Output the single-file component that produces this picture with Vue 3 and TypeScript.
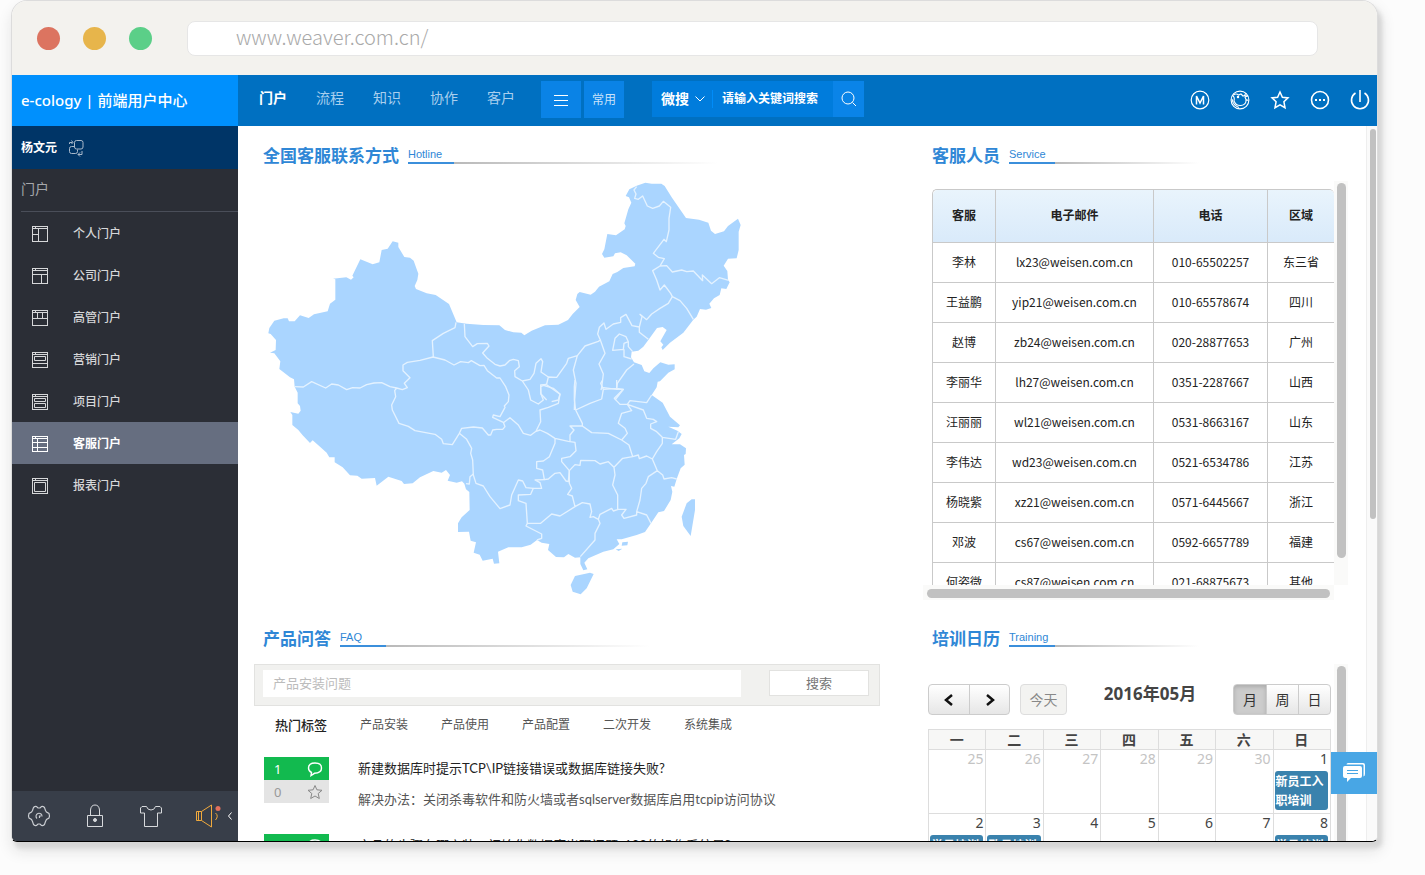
<script setup lang="ts">
import { ref } from 'vue'

interface MenuItem { name: string; icon: string }
interface Agent { name: string; mail: string; phone: string; area: string }
interface Day { n: number; other?: boolean; event?: string }
interface Question { replies: number; stars: number; title: string; answer: string }

const tabs: string[] = ['门户', '流程', '知识', '协作', '客户']
const activeTab = ref('门户')

const menu: MenuItem[] = [
  { name: '个人门户', icon: 'M1 9.5H7.5M7.5 3.5V17' },
  { name: '公司门户', icon: 'M1 7.5H17M10.5 7.5V17' },
  { name: '高管门户', icon: 'M1 9.5H17M6.5 3.5V9.5M11.5 3.5V9.5' },
  { name: '营销门户', icon: 'M3.5 5.5H14.5V9.5H3.5ZM1 12.5H17' },
  { name: '项目门户', icon: 'M3.5 5.5H14.5V8.5H3.5ZM3.5 10.5H14.5V14.5H3.5Z' },
  { name: '客服门户', icon: 'M1 7.5H17M1 12.5H17M6.5 3.5V17' },
  { name: '报表门户', icon: 'M3.5 5.5H14.5V14.5H3.5Z' },
]
const activeMenu = ref('客服门户')

const agents: Agent[] = [
  { name: '李林', mail: 'lx23@weisen.com.cn', phone: '010-65502257', area: '东三省' },
  { name: '王益鹏', mail: 'yip21@weisen.com.cn', phone: '010-65578674', area: '四川' },
  { name: '赵博', mail: 'zb24@weisen.com.cn', phone: '020-28877653', area: '广州' },
  { name: '李丽华', mail: 'lh27@weisen.com.cn', phone: '0351-2287667', area: '山西' },
  { name: '汪丽丽', mail: 'wl21@weisen.com.cn', phone: '0531-8663167', area: '山东' },
  { name: '李伟达', mail: 'wd23@weisen.com.cn', phone: '0521-6534786', area: '江苏' },
  { name: '杨晓紫', mail: 'xz21@weisen.com.cn', phone: '0571-6445667', area: '浙江' },
  { name: '邓波', mail: 'cs67@weisen.com.cn', phone: '0592-6657789', area: '福建' },
  { name: '何姿微', mail: 'cs87@weisen.com.cn', phone: '021-68875673', area: '其他' },
]

const tags: string[] = ['产品安装', '产品使用', '产品配置', '二次开发', '系统集成']
const questions: Question[] = [
  { replies: 1, stars: 0, title: '新建数据库时提示TCP\\IP链接错误或数据库链接失败?', answer: '解决办法：关闭杀毒软件和防火墙或者sqlserver数据库启用tcpip访问协议' },
  { replies: 1, stars: 0, title: '产品的步骤在哪安装，初始化数据库出现问题, 123的操作系统是?', answer: '' },
]

const weekdays: string[] = ['一', '二', '三', '四', '五', '六', '日']
const weeks: Day[][] = [
  [
    { n: 25, other: true }, { n: 26, other: true }, { n: 27, other: true }, { n: 28, other: true },
    { n: 29, other: true }, { n: 30, other: true }, { n: 1, event: '新员工入职培训' },
  ],
  [
    { n: 2, event: '学员培训' }, { n: 3, event: '政员培训' }, { n: 4 }, { n: 5 },
    { n: 6 }, { n: 7 }, { n: 8, event: '学员培训' },
  ],
]
const views: string[] = ['月', '周', '日']
const activeView = ref('月')
</script>

<template>
  <div class="window">
    <header class="chrome">
      <span class="dot red"></span>
      <span class="dot yellow"></span>
      <span class="dot green"></span>
      <input class="address" type="text" value="www.weaver.com.cn/" aria-label="地址" />
    </header>

    <div class="app">
      <aside class="sidebar">
        <h1 class="brand">e-cology | 前端用户中心</h1>
        <div class="user">
          <strong>杨文元</strong>
          <svg width="16" height="18" viewBox="0 0 16 18" fill="none" stroke="#a9b9cb">
            <rect x="6.500" y="1.500" width="8.500" height="8.500" rx="2" />
            <path d="M6 7.500H3.500Q1.500 7.500 1.500 9.500V12.500Q1.500 14.500 3.500 14.500H7.500Q9.500 14.500 9.500 12.500V10.500" />
            <path d="M1.500 5V3.500H4.500M3.500 1.500L5 3.500 3.500 5M14 12V15.500H10M12 13.500L10 15.500 12 17.500" />
          </svg>
        </div>
        <h2 class="group">门户</h2>
        <nav class="menu">
          <a
            v-for="m in menu"
            :key="m.name"
            href="#"
            :class="{ active: m.name === activeMenu }"
            @click.prevent="activeMenu = m.name"
          >
            <svg width="18" height="18" viewBox="0 0 18 18" fill="none" stroke="currentColor">
              <rect x="1.500" y="1.500" width="15" height="15" />
              <path d="M1 3.500H17M4.500 1V3.500" />
              <path :d="m.icon" />
            </svg>
            <span>{{ m.name }}</span>
          </a>
        </nav>
        <footer class="tools">
          <button type="button" aria-label="设置">
            <svg width="24" height="24" viewBox="0 0 24 24" fill="none" stroke="#c9ccd1" stroke-width="1.200">
              <path d="M6.500 3.500Q8 2 9.500 2.500L11 4H13L14.500 2.500Q16 2 17.500 3.500L18.500 6.500 19.500 8 22 9.500Q23 12 22 14L19.500 15.500 18.500 17.500 17.500 20.500Q16 22 14.500 21.500L13 20H11L9.500 21.500Q8 22 6.500 20.500L5.500 17.500 4.500 15.500 2 14Q1 12 2 9.500L4.500 8 5.500 6.500Z" />
              <path d="M10 14.500A3 3 0 1 1 15 12.500M12.500 14V12H14" />
            </svg>
          </button>
          <button type="button" aria-label="锁定">
            <svg width="24" height="24" viewBox="0 0 24 24" fill="none" stroke="#d7d9dc">
              <path d="M4.500 11.500H19.500V22.500H4.500ZM7.500 11V6Q8 1 12 1T16.500 6V11" />
              <circle cx="12" cy="16" r="1.500" fill="#d7d9dc" />
            </svg>
          </button>
          <button type="button" aria-label="换肤">
            <svg width="24" height="24" viewBox="0 0 24 24" fill="none" stroke="#d7d9dc">
              <path d="M1.500 9V4L3 2.500H7.500Q8.500 6 12 6T16.500 2.500H21L22.500 4V9H18.500V22.500H5.500V9H1.500" />
            </svg>
          </button>
          <button type="button" aria-label="公告">
            <svg width="26" height="24" viewBox="0 0 26 24" fill="none" stroke="#f0a93c">
              <path d="M1.500 7.500H6.500V16.500H1.500ZM3.500 7.500V16.500M6.500 7.500L16.500 1V23L6.500 16.500M20.500 9Q24 12 20.500 16" />
              <circle cx="23" cy="4.500" r="2.500" fill="#e2705c" stroke="none" />
            </svg>
          </button>
          <button type="button" class="fold" aria-label="收起">
            <svg width="6" height="10" viewBox="0 0 6 10" fill="none" stroke="#fff"><path d="M4.500 1.500L1.500 5 4.500 8.500" /></svg>
          </button>
        </footer>
      </aside>

      <div class="main">
        <div class="topbar">
          <nav class="tabs">
            <a
              v-for="t in tabs"
              :key="t"
              href="#"
              :class="{ active: t === activeTab }"
              @click.prevent="activeTab = t"
            >{{ t }}</a>
          </nav>
          <div class="quick">
            <button type="button" aria-label="菜单">
              <svg width="16" height="12" viewBox="0 0 16 12" stroke="#fff"><path d="M1 1.500H15M1 6.500H15M1 11.500H15" /></svg>
            </button>
            <button type="button">常用</button>
          </div>
          <form class="search" @submit.prevent>
            <button type="button" class="scope">
              微搜
              <svg width="10" height="6" viewBox="0 0 10 6" fill="none" stroke="#fff"><path d="M.5.5L5 5 9.500.5" /></svg>
            </button>
            <input type="text" placeholder="请输入关键词搜索" aria-label="搜索" />
            <button type="submit" class="go" aria-label="搜索">
              <svg width="18" height="18" viewBox="0 0 18 18" fill="none" stroke="#fff"><circle cx="8" cy="8" r="6" /><path d="M12.500 12.500L16 16" /></svg>
            </button>
          </form>
          <div class="actions">
            <button type="button" aria-label="M">
              <svg width="20" height="20" viewBox="0 0 20 20" fill="none" stroke="#fff">
                <circle cx="10" cy="10" r="8.800" stroke-width="1.200" /><path d="M6.500 14.500V6L10 13 13.500 6V14.500" stroke-width="1.500" />
              </svg>
            </button>
            <button type="button" aria-label="头像">
              <svg width="20" height="20" viewBox="0 0 20 20" fill="none" stroke="#fff" stroke-width="1.100">
                <circle cx="10" cy="10" r="8.900" />
                <path d="M2.500 5.500Q5 7 4 11Q6 16 11 15.500Q16.500 15 16 9.500L18.500 10.500M16 9.500L15 7 18 6 14.500 5.500 16 3M3.500 5Q6 3 8.500 5L11 4 13 6 14.500 5.500M2 9Q3 15.500 9 17.500" />
                <circle cx="8" cy="7" r=".7" fill="#fff" />
              </svg>
            </button>
            <button type="button" aria-label="收藏">
              <svg width="20" height="20" viewBox="0 0 20 20" fill="none" stroke="#fff" stroke-width="1.500">
                <path d="M10 2L12.400 7.200 18 7.900 13.900 11.700 15 17.700 10 14.800 5 17.700 6.100 11.700 2 7.900 7.600 7.200Z" />
              </svg>
            </button>
            <button type="button" aria-label="更多">
              <svg width="20" height="20" viewBox="0 0 20 20" fill="none" stroke="#fff" stroke-width="1.600">
                <circle cx="10" cy="10" r="8.500" /><path d="M5 10H7M9 10H11M13 10H15" stroke-width="2" />
              </svg>
            </button>
            <button type="button" aria-label="退出">
              <svg width="20" height="20" viewBox="0 0 20 20" fill="none" stroke="#fff" stroke-width="1.600">
                <path d="M5.500 3A8.500 8.500 0 1 0 14.500 3M10 0V12" />
              </svg>
            </button>
          </div>
        </div>

        <div class="body">
          <div class="left">
            <header class="section-title"><h3>全国客服联系方式</h3><span>Hotline</span></header>
            <svg class="map" viewBox="0 0 1500 1320">
              <g fill="#aad5ff">
                <path d="M58 474 73 452 101 445 113 445 117 454 134 454 150 436 176 444 192 433 233 424 240 401 256 389V328L249 326 289 322 303 329 311 322 307 317 331 268 368 283 388 277 395 240 413 236 428 214 445 218V231L463 261 480 263 491 272 505 311 502 330 494 348 498 357 530 370 557 375 597 402 620 457 650 461 700 465 748 466 765 480 790 487 814 488 823 496 845 482 885 466 925 464 954 450 968 432 989 411 977 390 982 372 989 366 1022 374 1035 365 1047 350 1078 334 1088 312 1102 306 1120 294 1154 289 1156 281 1130 256 1112 247 1095 250 1090 259 1063 263 1056 252 1063 238 1072 192 1098 196 1124 178 1127 168 1123 160 1135 118 1144 98 1137 82 1127 78 1138 58 1160 47 1186 38 1205 41 1234 41 1244 48 1265 82 1308 144 1347 149 1375 158 1383 182 1395 192 1422 184 1434 168 1464 146 1472 165 1466 185V240L1460 265 1434 266 1421 287 1432 303 1434 330 1439 337 1429 357 1414 355 1409 375 1392 385 1378 401 1384 414 1368 419 1350 417 1340 440 1330 449 1300 488 1260 518 1238 540 1234 532 1240 524 1231 514 1250 480 1238 471 1221 474 1195 510 1180 530 1165 542 1145 545 1143 562 1152 577 1175 585 1183 604 1198 609 1210 595 1231 577 1255 584 1274 583V598L1255 608 1230 634 1223 635 1220 652 1205 675 1238 698 1260 740 1290 766 1285 772 1255 770 1282 782 1295 792 1288 805 1265 823H1290L1308 835 1307 852 1302 855 1304 884 1292 895 1280 927 1273 950 1263 948 1267 965 1262 990 1242 1023 1225 1027 1203 1060 1185 1086 1160 1095 1115 1108 1100 1108 1108 1122 1090 1138 1060 1145 1015 1165 1003 1178 1012 1198 1000 1201 991 1182V1162L975 1163 955 1152 942 1162 918 1161 894 1140 898 1122 875 1118 861 1110 842 1124 815 1132H775L744 1145 748 1180 732 1181 728 1166 698 1172 689 1154 671 1148 678 1117 662 1112 657 1085 624 1086V1060L635 1042 659 1020 658 966 648 958 643 941 636 934 620 938 593 932 600 915 588 900 575 908 550 903 510 922 488 940 462 942 455 933 415 920 380 947 375 924 335 926 322 917 300 916 278 892 254 877V862H238L230 848 210 830 188 811 180 819 158 796 145 780 127 765V735L121 726 145 731 152 722 150 708 143 700V668L134 650 132 628 120 622 88 597 91 574 73 550 60 548 77 540 78 510 62 492 55 490Z" />
                <path d="M1020 1208 1031 1212 1010 1255 992 1273 968 1265 962 1245 975 1218ZM1335 988V1020L1322 1098 1300 1068 1295 1040 1310 1000 1325 988ZM1117 1117 1134 1115 1132 1126 1115 1127ZM1097 1138 1117 1136 1106 1143Z" />
              </g>
              <g fill="none" stroke="#e4f2ff" stroke-width="4" stroke-linejoin="round">
                <path d="M134 650 160 651 185 635 227 654 245 642 265 645 290 659 308 653 330 654 350 644 372 639 395 638 420 650 440 654 457 659 472 653 463 640 480 623 459 602V585L472 577 510 571 549 561 585 570 612 585 632 575 655 578 664 572 690 587 702 586 712 602 740 624H750L767 650 777 675 775 695 763 708 765 712 750 740 730 735 728 742 760 757 765 770 758 778 740 778 728 780 722 795H715L697 774 670 771 635 775 628 790 607 824 580 821 575 808 555 793 495 782 475 769 447 760 427 720 425 705 437 680 434 662 440 654" />
                <path d="M618 457 615 473 580 490 547 512 550 561M643 461 645 500 668 530 682 521 712 520 717 528 698 549 712 565 735 583 750 588 765 585 778 572 790 568 805 572 808 590 794 602 795 620 817 633 835 660 842 690 865 702 880 690 872 670V645L890 643M628 790 650 808 665 835 662 850 668 870 670 915 678 940 700 948 720 980 750 1016 780 1005 785 975 805 930 818 933 828 953 850 955" />
                <g transform="translate(750)">
                  <path d="M67 633 90 628 102 610 108 580 123 566 128 575 123 606 145 621 170 622 200 580 205 565 232 557 255 528 295 514 301 510 293 492 298 472 312 459 318 478 340 462 362 457V443L378 433 396 467 418 471 426 440 420 433 440 449 455 432 480 415 505 400 517 380M145 621 140 642 122 650 123 672 140 690M128 645 160 655 180 672 175 690 155 695M418 471V487L445 508M232 557 220 600 228 640 224 690 223 720M301 510 315 550 297 582 310 612 305 652 303 660M305 652 350 658 370 658 345 690M350 655 352 640 380 600 402 582M358 492 345 505 338 541 370 538 372 520 385 515 378 500ZM372 538V560L395 567M385 515V530L398 545" />
                  <path d="M410 50 402 60 408 72 404 85 415 88 428 78 442 108 458 115 478 108 490 94 512 112 507 145V180L499 215 492 208 460 250 475 262 493 266 480 288 458 302 470 330 480 360 493 345 512 370 517 380 540 392 560 415 580 448M480 288 500 287 517 306 545 300 560 305 580 303 608 332 607 315 635 341 658 323 686 331" />
                </g>
                <g transform="translate(570 630)">
                  <path d="M190 128 210 113 235 135 250 160 272 166 288 154 300 150 322 160 345 175 385 184 405 187 408 212 390 230 365 235V245L388 272 385 305 378 303 360 278 345 280 325 297 313 299 308 270 290 265V245L310 243 328 230 345 190V175M288 154 302 125 300 90 325 82 355 70 360 43 320 14M403 60 407 90 427 130V138H390L402 150 390 165V184M407 90 450 70 485 57 490 28 482 10 488 0M490 28 530 25V0M530 25 550 28 523 55 540 73 562 73 570 62 620 68 635 45" />
                  <path d="M427 138 455 158 505 160 545 180 562 160 555 145 535 130 545 100 575 92 562 73 610 90 620 115 640 118 650 125 632 132V145L650 155 667 172 707 178 715 155M545 180 567 195 578 230 548 235 522 262 505 245 480 252 465 242 422 241 420 256 405 254 388 272V310L395 325 383 343 397 348 405 380 360 408 335 402 302 430H262L258 370 235 362V345L272 343 280 325 305 325 300 308 285 300 313 299M578 230 595 225 598 236 620 228 637 237 650 215 667 190V172M637 237 652 272 668 285 672 297 695 293 710 297M652 272 625 290 618 310 605 325 600 360 590 395V405L552 415 545 405 558 388 535 388 520 393 515 385 480 403 475 418 460 410 450 412 455 395 450 372 427 368 405 380M522 262 525 285 518 315 533 345V388M475 418 480 430 465 460V480L421 530M590 395 620 405 633 430M262 430 258 438 305 462V475L291 480M78 311 88 312 90 290 100 282" />
                  <path d="M403 60V20L405 0" />
                </g>
              </g>
            </svg>

            <header class="section-title"><h3>产品问答</h3><span>FAQ</span></header>
            <form class="ask" @submit.prevent>
              <input type="text" placeholder="产品安装问题" aria-label="产品安装问题" />
              <button type="submit">搜索</button>
            </form>
            <div class="tags">
              <strong>热门标签</strong>
              <a v-for="t in tags" :key="t" href="#">{{ t }}</a>
            </div>
            <article v-for="q in questions" :key="q.title" class="question">
              <div class="votes">
                <div class="replies">
                  {{ q.replies }}
                  <svg width="16" height="16" viewBox="0 0 16 16" fill="none" stroke="#fff" stroke-width="1.400"><path d="M4.500 11.500 4 14.500 7.500 12.300Q14.500 12 14.500 7T8 2 1.500 7Q1.500 10 4.500 11.500Z" /></svg>
                </div>
                <div class="stars">
                  {{ q.stars }}
                  <svg width="16" height="16" viewBox="0 0 16 16" fill="none" stroke="#888"><path d="M8 1.500 9.900 5.800 15 6.300 11.200 9.500 12.300 14.500 8 12 3.700 14.500 4.800 9.500 1 6.300 6.100 5.800Z" /></svg>
                </div>
              </div>
              <div class="text">
                <h4>{{ q.title }}</h4>
                <p>{{ q.answer }}</p>
              </div>
            </article>
          </div>

          <div class="right">
            <header class="section-title"><h3>客服人员</h3><span>Service</span></header>
            <div class="scrollbox">
              <div class="viewport">
                <table class="agents">
                  <thead>
                    <tr><th class="c1">客服</th><th class="c2">电子邮件</th><th class="c3">电话</th><th class="c4">区域</th></tr>
                  </thead>
                  <tbody>
                    <tr v-for="a in agents" :key="a.mail">
                      <td>{{ a.name }}</td><td>{{ a.mail }}</td><td>{{ a.phone }}</td><td>{{ a.area }}</td>
                    </tr>
                  </tbody>
                </table>
              </div>
              <div class="vbar"><i></i></div>
              <div class="hbar"><i></i></div>
            </div>

            <header class="section-title"><h3>培训日历</h3><span>Training</span></header>
            <div class="calendar-box">
              <div class="calendar">
                <div class="cal-tools">
                  <div class="btns step">
                    <button type="button" aria-label="上个月">
                      <svg width="12" height="14" viewBox="0 0 12 14" fill="none" stroke="#111" stroke-width="2.500"><path d="M9 2L3 7 9 12" /></svg>
                    </button>
                    <button type="button" aria-label="下个月">
                      <svg width="12" height="14" viewBox="0 0 12 14" fill="none" stroke="#111" stroke-width="2.500"><path d="M3 2L9 7 3 12" /></svg>
                    </button>
                  </div>
                  <button type="button" class="today" disabled>今天</button>
                  <h4>2016年05月</h4>
                  <div class="btns view">
                    <button
                      v-for="v in views"
                      :key="v"
                      type="button"
                      :class="{ active: v === activeView }"
                      @click="activeView = v"
                    >{{ v }}</button>
                  </div>
                </div>
                <table class="month">
                  <thead><tr><th v-for="w in weekdays" :key="w">{{ w }}</th></tr></thead>
                  <tbody>
                    <tr v-for="(week, i) in weeks" :key="i">
                      <td v-for="d in week" :key="d.n" :class="{ other: d.other }">
                        <span class="num">{{ d.n }}</span>
                        <a v-if="d.event" class="event" href="#">{{ d.event }}</a>
                      </td>
                    </tr>
                  </tbody>
                </table>
              </div>
              <div class="vbar open"><i></i></div>
            </div>
          </div>

          <div class="page-bar"><i></i></div>
        </div>
      </div>
    </div>

    <button type="button" class="chat" aria-label="在线咨询">
      <svg width="22" height="20" viewBox="0 0 22 20" fill="#fff">
        <path d="M5 0H20Q22 0 22 2V11Q22 13 20.500 13.500V2.500Q20.500 1.500 19.500 1.500H3.500Q3.500 0 5 0Z" />
        <path d="M2 3H17Q19 3 19 5V13Q19 15 17 15H8L4 19V15H2Q0 15 0 13V5Q0 3 2 3Z" />
        <path d="M4 7.500H15M4 10.500H15" stroke="#48a6e5" />
      </svg>
    </button>
  </div>
</template>

<style>
body { background: #fcfcfc; }
</style>

<style scoped>
* { box-sizing: border-box; }
h1, h2, h3, h4, p { margin: 0; font-size: inherit; }
button, input { font: inherit; color: inherit; border: 0; padding: 0; margin: 0; background: none; outline: none; }
button { display: flex; align-items: center; justify-content: center; }
a { color: inherit; text-decoration: none; }
svg { display: block; flex: none; }

.window {
  position: relative;
  display: flex;
  flex-direction: column;
  height: calc(100vh - 33px);
  margin: 0 47px 33px 11px;
  overflow: hidden;
  font: 13px/20px "Noto Sans", "Noto Sans CJK SC", sans-serif;
  background: #fff;
  border: 1px solid #dcdcdc;
  border-bottom-color: #000;
  border-radius: 16px 16px 6px 6px;
  box-shadow: 4px 6px 4px #d6d6d6, 2px 8px 16px #ddd;
}
.chrome {
  display: flex;
  flex: none;
  align-items: center;
  gap: 23px;
  height: 74px;
  padding: 0 59px 0 25px;
  background: #f3f2ee;
}
.dot { width: 23px; height: 23px; border-radius: 50%; }
.red { background: #dc7460; }
.yellow { background: #e7b54b; }
.green { background: #5bcf88; }
.address {
  flex: 1;
  height: 35px;
  margin-left: 12px;
  padding: 0 48px 4px;
  font: 300 20px/30px "Noto Sans CJK SC", sans-serif;
  color: #a9a9a9;
  background: #fff;
  border: 1px solid #e6e6e6;
  border-radius: 8px;
}
.app { display: flex; flex: 1; min-height: 0; }

.sidebar { display: flex; flex: none; flex-direction: column; width: 226px; color: #d6d7d9; background: #2b2e36; }
.brand { height: 51px; padding-left: 9px; font-size: 15px; font-weight: 500; line-height: 50px; color: #fff; background: #0090fd; }
.user { display: flex; align-items: center; gap: 11px; height: 43px; padding-left: 9px; font-size: 12px; color: #fff; background: #003567; }
.group { height: 43px; margin-left: 9px; font-size: 14px; font-weight: 400; line-height: 40px; color: #a5a7ab; border-bottom: 1px solid #4a4e59; }
.menu { flex: 1; }
.menu a { display: flex; align-items: center; gap: 24px; height: 42px; padding: 2px 0 0 19px; font-size: 12px; font-weight: 500; }
.menu a.active { font-weight: 700; color: #fff; background: #666e80; }
.tools { display: flex; align-items: center; gap: 32px; height: 50px; padding-left: 15px; background: #383e49; }
.tools .fold { margin-left: -26px; }

.main { display: flex; flex: 1; flex-direction: column; min-width: 0; }
.topbar { display: flex; flex: none; align-items: flex-start; height: 51px; padding: 6px 7px 0 21px; color: #fff; background: #0070c1; }
.tabs { display: flex; gap: 29px; font-size: 14px; line-height: 33px; color: #a9cfee; }
.tabs .active { font-weight: 700; color: #fff; }
.quick { display: flex; gap: 3px; margin-left: 26px; font-size: 12px; color: #c9e2fa; }
.quick button { width: 40px; height: 37px; background: #0a83e6; }
.search { display: flex; height: 36px; margin-left: 28px; background: #007cdc; }
.search .scope { gap: 6px; padding: 0 7px 0 9px; font-size: 14px; font-weight: 700; }
.search input { width: 121px; padding-left: 10px; font-size: 12px; font-weight: 700; background: linear-gradient(#008cf8, #008cf8) 0 50% / 1px 18px no-repeat; }
.search input::placeholder { color: #fff; opacity: 1; }
.search .go { width: 31px; background: #0a84e8; }
.actions { display: flex; gap: 20px; margin: 9px 0 0 auto; }

.body { display: flex; flex: 1; min-height: 0; overflow: hidden; }
.left { flex: 1; min-width: 0; padding: 18px 0 0 16px; }
.section-title { display: flex; gap: 9px; height: 24px; padding-left: 9px; color: #2f87d6; }
.section-title h3 { font-size: 17px; font-weight: 700; line-height: 24px; white-space: nowrap; }
.section-title span {
  width: 310px;
  height: 20px;
  font: 11px/21px "Liberation Sans", sans-serif;
  background: linear-gradient(90deg, #3b8fdb 46px, #b9b9b9 46px, #fff 310px) 0 100% / 100% 2px no-repeat;
}
.right .section-title span { width: 200px; background-image: linear-gradient(90deg, #3b8fdb 46px, #b9b9b9 46px, #fff 190px); }
.map { width: 500px; height: 440px; margin: 2px 0 17px -4px; }

.ask { display: flex; align-items: center; justify-content: space-between; height: 42px; margin: 13px 43px 0 0; padding: 0 10px 4px 8px; background: #f1f1ef; border: 1px solid #e2e2e0; }
.ask input { flex: 1; height: 27px; padding-left: 10px; background: #fff; }
.ask input::placeholder { color: #bcbcbc; opacity: 1; }
.ask button { width: 100px; height: 26px; margin-left: 28px; color: #777; background: #fff; border: 1px solid #e2e2e0; }
.tags { display: flex; gap: 33px; padding: 9px 0 0 21px; font-size: 12px; color: #555; }
.tags strong { font-size: 13px; font-weight: 500; color: #222; }
.question { display: flex; gap: 29px; height: 77px; padding-left: 10px; }
.tags + .question { margin-top: 22px; }
.votes { width: 65px; }
.votes div { display: flex; align-items: center; justify-content: space-between; height: 23px; padding: 0 6px 0 10px; }
.replies { color: #fff; background: #12ba4f; }
.stars { color: #999; background: #e4e4e4; }
.text { font-family: Lato, "Noto Sans CJK SC", sans-serif; white-space: nowrap; }
.text h4 { font-weight: 400; line-height: 23px; color: #222; }
.text p { padding-top: 9px; color: #555; }

.right { flex: none; width: 443px; padding: 18px 18px 0 0; }
.scrollbox { display: grid; grid-template-columns: 1fr 14px; grid-template-rows: 404px 15px; margin: 13px 0 27px; }
.viewport { padding: 8px 0 0 9px; overflow: hidden; }
.vbar { padding: 2px 2px 27px 3px; background: #fafaf9; }
.vbar.open { padding-bottom: 0; }
.vbar i, .hbar i, .page-bar i { display: block; background: #c1c1c1; border-radius: 5px; }
.vbar i { height: 100%; }
.vbar.open i { border-radius: 5px 5px 0 0; }
.hbar { padding: 4px 4px 2px; background: #fafaf9; }
.hbar i { height: 9px; }
table { border-spacing: 0; table-layout: fixed; }
.agents { width: 100%; font-family: "Noto Sans CJK SC", sans-serif; font-size: 12px; color: #222; text-align: center; border-top: 1px solid #c9c9c9; border-left: 1px solid #c9c9c9; border-radius: 5px 5px 0 0; }
.agents th, .agents td { height: 40px; padding: 0 0 2px; border-right: 1px solid #c9c9c9; border-bottom: 1px solid #c9c9c9; }
.agents th { height: 53px; background: linear-gradient(#e9f4fc, #d9eafa); }
.agents th:first-child { border-radius: 5px 0 0; }
.agents th:last-child { border-radius: 0 5px 0 0; }
.agents th:last-child, .agents td:last-child { border-right: 0; }
.c1 { width: 63px; }
.c2 { width: 158px; }
.c3 { width: 114px; }

.calendar-box { display: grid; grid-template-columns: 1fr 14px; height: 200px; margin-top: 13px; }
.calendar { padding: 20px 3px 0 5px; color: #444; }
.cal-tools { display: flex; height: 45px; font-size: 14px; }
.btns { display: flex; height: 31px; overflow: hidden; color: #333; background: linear-gradient(#fff, #e6e6e6); border: 1px solid #ccc; border-radius: 4px; }
.btns button + button { border-left: 1px solid #ccc; }
.step button { width: 40px; }
.view button { width: 32px; }
.view .active { color: #333; background: #ccc; box-shadow: inset 0 2px 4px #aaa; }
.today { width: 47px; height: 31px; margin-left: 10px; color: #888; background: #f3f3f1; border: 1px solid #ddd; border-radius: 4px; }
.cal-tools h4 { flex: 1; font-size: 17px; line-height: 20px; text-align: center; }
.month { width: 100%; border-top: 1px solid #ddd; border-left: 1px solid #ddd; }
.month th, .month td { padding: 0 2px 0 1px; vertical-align: top; border-right: 1px solid #ddd; border-bottom: 1px solid #ddd; }
.month th { height: 20px; font-size: 14px; line-height: 19px; background: #f7f7f6; }
.month td { height: 64px; font-size: 14px; line-height: 18px; }
.num { display: block; text-align: right; }
.other .num { color: #c4c4c4; }
.event { display: block; padding: 1px 0 0 1px; margin-top: 3px; font-size: 12px; font-weight: 700; line-height: 19px; color: #fff; background: #3a82ad; border-radius: 3px; overflow-wrap: anywhere; }

.page-bar { width: 11px; padding: 3px 1px 0 3px; background: #fafafa; border-left: 1px solid #eee; }
.page-bar i { height: 390px; }
.chat { position: absolute; right: 0; bottom: 47px; width: 46px; height: 42px; background: #48a6e5; }
</style>
